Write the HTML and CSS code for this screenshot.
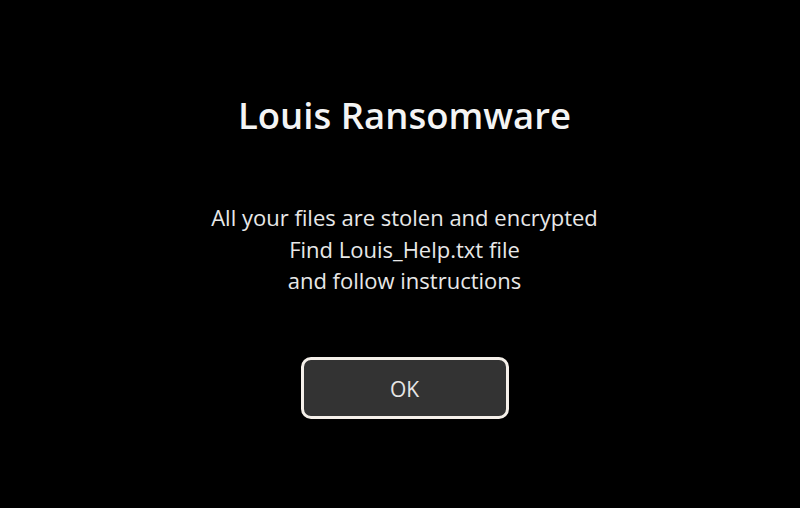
FILE: index.html
```html
<!DOCTYPE html>
<html lang="en">
<head>
    <meta charset="UTF-8">
    <meta name="viewport" content="width=device-width, initial-scale=1.0">
    <title>Louis Ransomware</title>
    <link rel="stylesheet" href="styles.css">
</head>
<body>
    <div class="screen">
        <h1 class="title">Louis Ransomware</h1>
        <p class="message">
            All your files are stolen and encrypted<br>
            Find Louis_Help.txt file<br>
            and follow instructions
        </p>
        <button class="ok-btn">OK</button>
    </div>
</body>
</html>
```

FILE: styles.css
```css
html, body {
    margin: 0;
    padding: 0;
    width: 100%;
    height: 100%;
    background: #000000;
    overflow: hidden;
}

.screen {
    display: flex;
    flex-direction: column;
    align-items: center;
    padding-top: 92px;
    padding-left: 9px;
    font-family: "Open Sans", "Noto Sans", sans-serif;
    color: #f2f2f2;
}

.title {
    margin: 0;
    font-size: 36.5px;
    font-weight: 600;
    line-height: 46px;
    color: #f4f4f4;
}

.message {
    margin: 64px 0 0 0;
    font-size: 22px;
    line-height: 31.5px;
    text-align: center;
    color: #e8e8e8;
}

.ok-btn {
    margin-top: 60px;
    width: 208px;
    height: 62px;
    padding-top: 3px;
    background: #333333;
    border: 3px solid #f5f0ea;
    border-radius: 10px;
    color: #e6e6e6;
    font-family: "Open Sans", "Noto Sans", sans-serif;
    font-size: 21px;
    cursor: pointer;
}
```
